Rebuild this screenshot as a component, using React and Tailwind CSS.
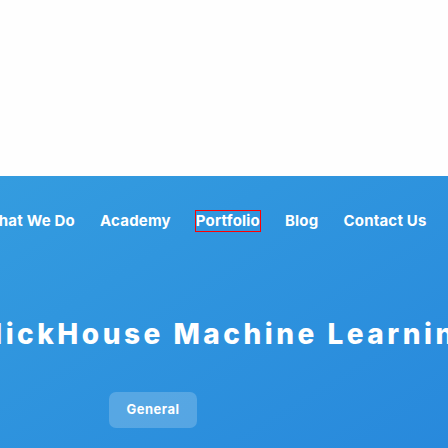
import React from 'react';

const navItems = ['What We Do', 'Academy', 'Portfolio', 'Blog', 'Contact Us'];

const App = () => {
  return (
    <div
      className="w-[448px] h-[448px] overflow-hidden bg-white flex flex-col"
      style={{ fontFamily: 'Inter, "Open Sans", sans-serif' }}
    >
      {/* blank top area */}
      <div className="h-[176px] shrink-0 bg-[#fefefe]" />

      {/* hero */}
      <div className="flex-1 bg-gradient-to-br from-[#349cdf] to-[#2889dc] flex flex-col text-white">
        <nav className="flex items-center whitespace-nowrap gap-[25px] ml-[-17px] mt-[35px] text-[15px] font-bold leading-[20px] tracking-[0.2px]">
          {navItems.map((item) => (
            <a
              key={item}
              href="#"
              className={item === 'Portfolio' ? 'outline outline-1 outline-[#ff0000]' : ''}
            >
              {item}
            </a>
          ))}
        </nav>

        <div className="flex justify-center mt-[87px]">
          <h1 className="whitespace-nowrap text-[28px] font-extrabold leading-[32px] tracking-[3.5px]">
            ClickHouse Machine Learning
          </h1>
        </div>

        <div className="flex mt-[42px] pl-[109px]">
          <span className="w-[88px] h-[36px] rounded-[7px] bg-white/20 flex items-center justify-center text-[13px] font-bold tracking-[0.5px]">
            General
          </span>
        </div>
      </div>
    </div>
  );
};

export default App;
